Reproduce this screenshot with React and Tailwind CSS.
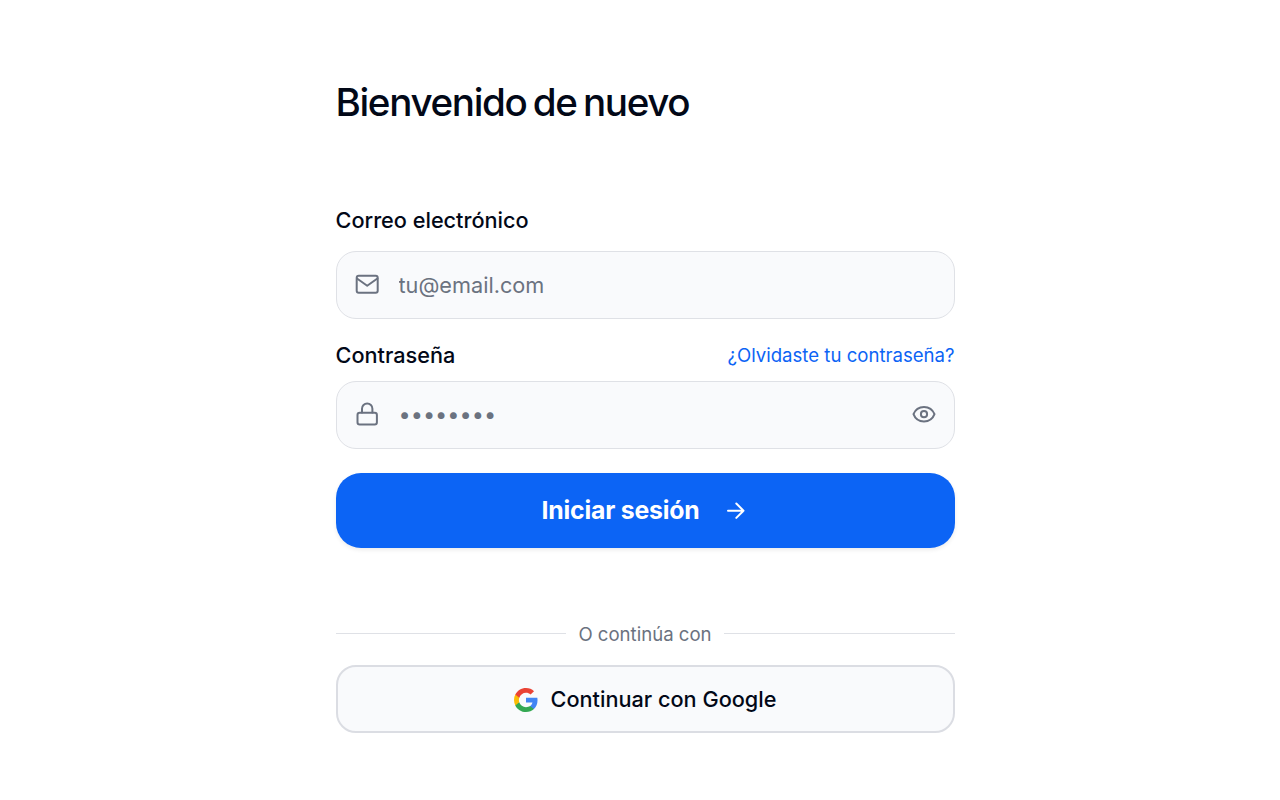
import React from 'react';

const line = {
  fill: 'none',
  stroke: 'currentColor',
  strokeWidth: 2,
  strokeLinecap: 'round',
  strokeLinejoin: 'round',
};

function MailIcon() {
  return (
    <svg className="mb-px h-6 w-6 shrink-0" viewBox="0 0 24 24" {...line}>
      <rect x="1.700" y="3.700" width="21" height="17" rx="2" />
      <path d="M2 6.500L12.200 13.700L22.400 6.500" />
    </svg>
  );
}

function LockIcon() {
  return (
    <svg className="mb-px h-6 w-6 shrink-0" viewBox="0 0 24 24" {...line}>
      <rect x="2.500" y="10.800" width="19.400" height="11.700" rx="2.200" />
      <path d="M7 10.500V6.700a5.200 5.200 0 0 1 10.400 0v3.800" />
    </svg>
  );
}

function EyeIcon() {
  return (
    <svg className="mb-px h-6 w-6" viewBox="0 0 24 24" {...line}>
      <path d="M1.500 12.200C3.300 7.300 7.400 4.900 12 4.900S20.600 7.300 22.500 12.200C20.600 17.100 16.600 19.500 12 19.500S3.300 17.100 1.500 12.200Z" />
      <circle cx="12" cy="12.200" r="3.1" />
    </svg>
  );
}

function ArrowIcon() {
  return (
    <svg className="h-6 w-6" viewBox="0 0 24 24" {...line}>
      <path d="M4 11.700h15.500M12.300 4.500L19.500 11.700l-7.200 7.200" />
    </svg>
  );
}

function GoogleIcon() {
  return (
    <svg className="h-6 w-6" viewBox="1 1 22 22">
      <path fill="#4285F4" d="M22.56 12.25c0-.78-.07-1.530-.2-2.250H12v4.260h5.920c-.26 1.370-1.040 2.530-2.210 3.310v2.770h3.570c2.080-1.920 3.280-4.740 3.280-8.090z" />
      <path fill="#34A853" d="M12 23c2.970 0 5.460-.98 7.280-2.660l-3.570-2.770c-.98.66-2.230 1.060-3.710 1.060-2.860 0-5.290-1.930-6.160-4.530H2.180v2.840C3.990 20.530 7.700 23 12 23z" />
      <path fill="#FBBC05" d="M5.840 14.090c-.22-.66-.35-1.360-.35-2.090s.13-1.430.35-2.090V7.070H2.180C1.430 8.550 1 10.220 1 12s.43 3.450 1.180 4.930l3.660-2.840z" />
      <path fill="#EA4335" d="M12 5.380c1.620 0 3.060.56 4.210 1.640l3.150-3.150C17.450 2.090 14.970 1 12 1 7.700 1 3.990 3.470 2.180 7.070l3.660 2.840c.87-2.600 3.300-4.530 6.160-4.530z" />
    </svg>
  );
}

export default function App() {
  return (
    <main className="h-[800px] overflow-hidden bg-white pt-[78px] pl-[335.500px] font-['Inter',sans-serif] text-[#020817]">
      <form className="flex w-[619px] flex-col" onSubmit={(e) => e.preventDefault()}>
        <h1 className="h-12 text-[38.600px] leading-[48px] font-[540] tracking-[-1.350px] whitespace-nowrap [word-spacing:-2.600px]">
          Bienvenido de nuevo
        </h1>

        <label htmlFor="email" className="mt-[78px] h-8 text-[21.700px] leading-8 font-medium tracking-[-0.010px]">
          Correo electrónico
        </label>
        <div className="mt-[14.500px] flex h-[68.500px] items-center rounded-[20px] border border-[#dfe1e6] bg-[#f9fafc] px-[18px] text-[#6b7280]">
          <MailIcon />
          <input
            id="email"
            type="email"
            placeholder="tu@email.com"
            className="mt-px ml-5 min-w-0 flex-1 bg-transparent text-[21.700px] outline-none placeholder:text-[#6b7280]"
          />
        </div>

        <div className="mt-5 flex h-8 items-center justify-between">
          <label htmlFor="password" className="text-[21.700px] leading-8 font-medium">Contraseña</label>
          <a href="#" className="text-[18.600px] leading-8 text-[#0c64f5]">¿Olvidaste tu contraseña?</a>
        </div>
        <div className="mt-[9.500px] flex h-[68.500px] items-center rounded-[20px] border border-[#dfe1e6] bg-[#f9fafc] px-[18px] text-[#6b7280]">
          <LockIcon />
          <input
            id="password"
            type="password"
            placeholder="••••••••"
            className="ml-5 min-w-0 flex-1 bg-transparent text-[21.700px] outline-none placeholder:text-[#6b7280]"
          />
          <button type="button" aria-label="Mostrar contraseña"><EyeIcon /></button>
        </div>

        <button className="mt-6 flex h-[75px] items-center justify-center gap-[25px] rounded-[25px] bg-[#0c64f5] text-[24.800px] font-bold tracking-[-0.200px] text-white shadow-[0_2px_4px_rgba(0,0,0,0.08)]">
          Iniciar sesión
          <ArrowIcon />
        </button>

        <div className="mt-[69px] flex h-8 items-center gap-3 text-[18.600px] text-[#6b7280]">
          <span className="h-px flex-1 bg-[#dfe1e6]" />
          <span className="pt-[3px]">O continúa con</span>
          <span className="h-px flex-1 bg-[#dfe1e6]" />
        </div>

        <button type="button" className="mt-4 flex h-[68px] items-center justify-center gap-[13px] rounded-[20px] border-2 border-[#dbdde3] bg-[#f9fafc] pt-px text-[21.700px] font-medium">
          <GoogleIcon />
          Continuar con Google
        </button>
      </form>
    </main>
  );
}
